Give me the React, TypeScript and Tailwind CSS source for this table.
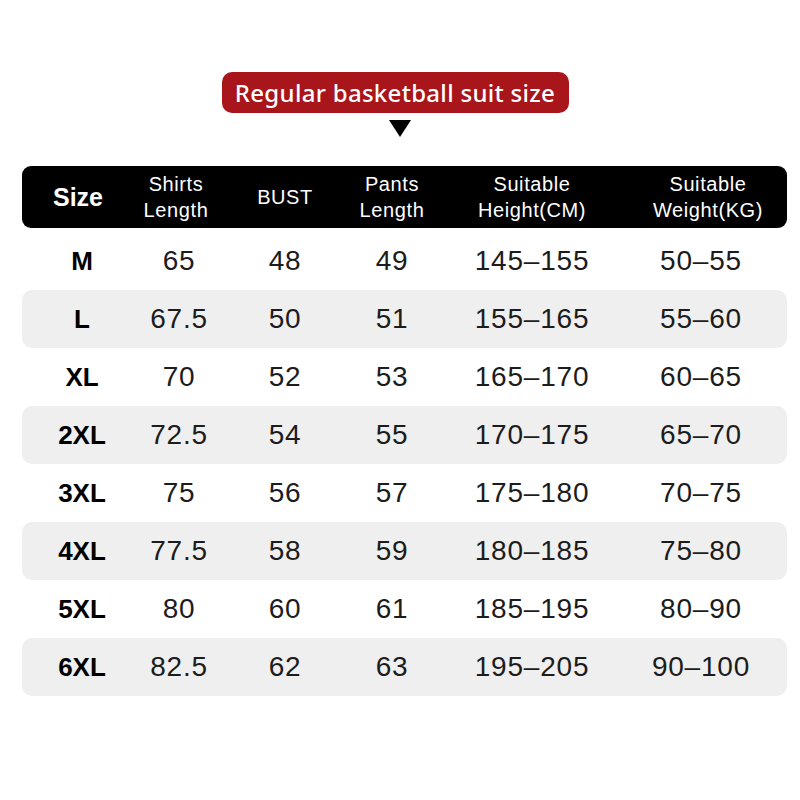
const rows = [
  ["M", "65", "48", "49", "145–155", "50–55"],
  ["L", "67.5", "50", "51", "155–165", "55–60"],
  ["XL", "70", "52", "53", "165–170", "60–65"],
  ["2XL", "72.5", "54", "55", "170–175", "65–70"],
  ["3XL", "75", "56", "57", "175–180", "70–75"],
  ["4XL", "77.5", "58", "59", "180–185", "75–80"],
  ["5XL", "80", "60", "61", "185–195", "80–90"],
  ["6XL", "82.5", "62", "63", "195–205", "90–100"],
];

const cols = "grid grid-cols-[120px_74px_138px_76px_204px_142px]";

export default function App() {
  return (
    <main className="w-[800px] h-[800px] bg-white font-['Liberation_Sans',Arial,sans-serif] text-[#1c1c1c] overflow-hidden">
      <div className="flex flex-col items-center pt-[72px]">
        <div className="mr-[10px] h-[41px] w-[347px] rounded-[10px] bg-[#a8151b] flex items-center justify-center text-white text-[24px] font-medium tracking-[0.3px] font-['Noto_Sans',sans-serif]">
          Regular basketball suit size
        </div>
        <div className="mt-[7px] w-0 h-0 border-l-[11px] border-r-[11px] border-t-[17px] border-l-transparent border-r-transparent border-t-black" />
      </div>

      <section className="mx-[22px] mt-[29px] w-[765px]">
        <div className={`${cols} h-[62px] bg-black rounded-[9px] text-white items-center text-[20px] leading-[26px] tracking-[0.6px]`}>
          <div className="flex justify-center pr-[8px] text-[25px] font-bold tracking-normal">Size</div>
          <div className="flex flex-col items-center pr-[6px] whitespace-nowrap">
            <span>Shirts</span>
            <span>Length</span>
          </div>
          <div className="flex justify-center whitespace-nowrap">BUST</div>
          <div className="flex flex-col items-center whitespace-nowrap">
            <span>Pants</span>
            <span>Length</span>
          </div>
          <div className="flex flex-col items-center whitespace-nowrap">
            <span>Suitable</span>
            <span>Height(CM)</span>
          </div>
          <div className="flex flex-col items-center pl-[6px] whitespace-nowrap">
            <span>Suitable</span>
            <span>Weight(KG)</span>
          </div>
        </div>

        <div className="mt-[4px] flex flex-col">
          {rows.map((r, i) => (
            <div
              key={r[0]}
              className={`${cols} h-[58px] items-center rounded-[10px] text-[28px] tracking-[0.8px] ${i % 2 === 1 ? "bg-[#efefef]" : "bg-white"}`}
            >
              <div className="flex justify-center font-bold text-[26px] tracking-normal text-black">{r[0]}</div>
              <div className="flex justify-center whitespace-nowrap">{r[1]}</div>
              <div className="flex justify-center whitespace-nowrap">{r[2]}</div>
              <div className="flex justify-center whitespace-nowrap">{r[3]}</div>
              <div className="flex justify-center whitespace-nowrap">{r[4]}</div>
              <div className="flex justify-center pr-[8px] whitespace-nowrap">{r[5]}</div>
            </div>
          ))}
        </div>
      </section>
    </main>
  );
}
